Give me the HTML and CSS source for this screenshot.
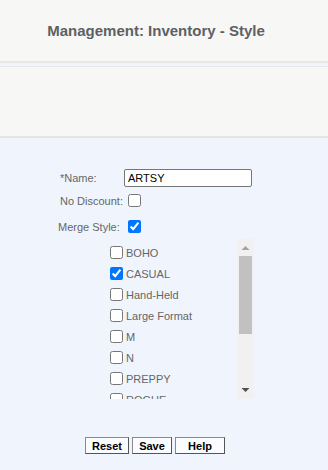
FILE: index.html
```html
<!DOCTYPE html>
<html lang="en">
<head>
  <meta charset="UTF-8" />
  <title>Management: Inventory - Style</title>
  <link rel="stylesheet" href="styles.css">
</head>
<body>
  <div class="page-header">
    <h1>Management: Inventory - Style</h1>
  </div>
  <div class="toolbar"></div>

  <div class="main">
    <div class="form-row name-row">
      <label class="field-label" for="styleName">*Name:</label>
      <input type="text" id="styleName" class="text-input" value="ARTSY" />
    </div>
    <div class="form-row discount-row">
      <label class="field-label" for="noDiscount">No Discount:</label>
      <input type="checkbox" id="noDiscount" />
    </div>
    <div class="form-row merge-row">
      <label class="field-label merge-label" for="mergeStyle">Merge Style:</label>
      <input type="checkbox" id="mergeStyle" checked />
    </div>

    <!-- styles to merge into -->
    <div class="style-box">
      <div class="style-list">
        <label class="style-item"><input type="checkbox" />BOHO</label>
        <label class="style-item"><input type="checkbox" checked />CASUAL</label>
        <label class="style-item"><input type="checkbox" />Hand-Held</label>
        <label class="style-item"><input type="checkbox" />Large Format</label>
        <label class="style-item"><input type="checkbox" />M</label>
        <label class="style-item"><input type="checkbox" />N</label>
        <label class="style-item"><input type="checkbox" />PREPPY</label>
        <label class="style-item"><input type="checkbox" />ROGUE</label>
      </div>
      <div class="scrollbar">
        <div class="sb-btn">
          <svg width="17" height="17" viewBox="0 0 17 17"><polygon points="4.5,11 12.5,11 8.5,7" fill="#a3a3a3"/></svg>
        </div>
        <div class="sb-track">
          <div class="sb-thumb"></div>
        </div>
        <div class="sb-btn">
          <svg width="17" height="17" viewBox="0 0 17 17"><polygon points="4.5,6 12.5,6 8.5,10" fill="#505050"/></svg>
        </div>
      </div>
    </div>

    <div class="buttons">
      <button class="btn btn-reset">Reset</button>
      <button class="btn btn-save">Save</button>
      <button class="btn btn-help">Help</button>
    </div>
  </div>
</body>
</html>
```

FILE: styles.css
```css
body {
  margin: 0;
  font-family: Arial, "Liberation Sans", sans-serif;
  background-color: #f0f5fd;
  height: 470px;
  overflow: hidden;
}

.page-header {
  background-color: #f7f7f5;
  height: 61px;
  border-bottom: 2px solid #e8e8e6;
  display: flex;
  align-items: center;
  justify-content: center;
}

.page-header h1 {
  margin: 0 16px 0 0;
  font-size: 15px;
  font-weight: bold;
  color: #5d6165;
}

.toolbar {
  margin-top: 3px;
  border-top: 1px solid #e6e6e2;
  background-color: #f7f7f5;
  height: 69px;
  border-bottom: 2px solid #e4e4e0;
}

.main {
  padding: 31px 0 0 60px;
}

.form-row {
  display: flex;
  align-items: center;
}

.field-label {
  width: 64px;
  font-size: 11px;
  color: #666;
}

.merge-label {
  margin-left: -2px;
  width: 66px;
}

.text-input {
  width: 128px;
  height: 18px;
  box-sizing: border-box;
  margin: 0;
  padding: 1px 3px;
  font-family: Arial, "Liberation Sans", sans-serif;
  font-size: 11px;
  color: #000;
  border: 1px solid #767676;
  border-radius: 2px;
  background-color: #fff;
}

.form-row input[type="checkbox"] {
  margin: 3px 3px 3px 4px;
  width: 13px;
  height: 13px;
}

.discount-row {
  margin-top: 4px;
}

.merge-row {
  margin-top: 7px;
}

.style-box {
  margin: 3px 0 0 46px;
  width: 148px;
  height: 160px;
  display: flex;
}

.style-list {
  flex: 1;
  overflow: hidden;
  padding-top: 3px;
}

.style-item {
  display: flex;
  align-items: center;
  height: 21px;
  font-size: 11px;
  color: #666;
}

.style-item input {
  margin: 0 3px 0 4px;
  width: 13px;
  height: 13px;
}

.scrollbar {
  width: 17px;
  background-color: #f1f1f1;
  display: flex;
  flex-direction: column;
}

.sb-btn {
  height: 17px;
}

.sb-btn svg {
  display: block;
}

.sb-track {
  flex: 1;
  padding: 0 2px;
}

.sb-thumb {
  height: 78px;
  background-color: #c1c1c1;
}

.buttons {
  margin: 38px 0 0 25px;
  display: flex;
  gap: 3px;
}

.btn {
  height: 17px;
  padding: 0;
  font-family: Arial, "Liberation Sans", sans-serif;
  font-size: 11px;
  font-weight: bold;
  color: #000;
  background-color: #fafcff;
  border: 1px solid #8a8a8a;
  border-right-color: #555;
  border-bottom-color: #555;
  border-radius: 0;
  cursor: pointer;
}

.btn-reset {
  width: 44px;
}

.btn-save {
  width: 40px;
}

.btn-help {
  width: 50px;
}
```
